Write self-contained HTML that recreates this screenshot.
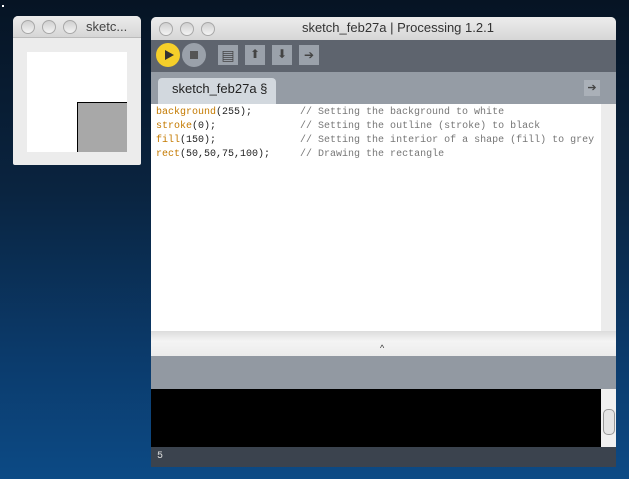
<!DOCTYPE html><html><head><style>
body{margin:0;width:629px;height:479px;overflow:hidden;position:relative;font-family:"Liberation Sans",sans-serif;
background:linear-gradient(180deg,#061424 0%,#0a2440 40%,#0b3b6c 75%,#0c4a85 100%);}
.a{position:absolute}
.tb{background:linear-gradient(#ececec,#d6d6d6);border-radius:5px 5px 0 0}
.lt{width:12px;height:12px;border-radius:50%;background:linear-gradient(#d0d0d0,#f4f4f4);border:1px solid #a8a8a8;top:4px}
.code{font-family:"Liberation Mono",monospace;font-size:10px;line-height:14px;white-space:pre;color:#222}
.k{color:#c47a00}.c{color:#777}
.sq{width:20px;height:20px;background:#9aa1aa;top:45px}
</style></head><body>
<div class="a" style="left:2px;top:5px;width:2px;height:2px;background:#fff"></div>
<div class="a" style="left:13px;top:16px;width:128px;height:149px;background:#ececec;border-radius:5px 5px 2px 2px">
 <div class="a tb" style="left:0;top:0;width:128px;height:21px;border-bottom:1px solid #bbb"></div>
 <div class="a lt" style="left:8px"></div><div class="a lt" style="left:29px"></div><div class="a lt" style="left:50px"></div>
 <div class="a" style="left:73px;top:3px;font-size:13px;color:#444">sketc...</div>
 <div class="a" style="left:14px;top:36px;width:100px;height:100px;background:#fff"></div>
 <div class="a" style="left:64px;top:86px;width:49px;height:49px;background:#a8a8a8;border-left:1px solid #000;border-top:1px solid #000"></div>
</div>
<div class="a" style="left:151px;top:17px;width:465px;height:450px;background:#ececec;border-radius:5px 5px 0 0;overflow:hidden">
 <div class="a tb" style="left:0;top:0;width:465px;height:23px"></div>
 <div class="a lt" style="left:8px;top:5px"></div><div class="a lt" style="left:29px;top:5px"></div><div class="a lt" style="left:50px;top:5px"></div>
 <div class="a" style="left:0;top:3px;width:465px;text-align:center;font-size:13px;color:#333">&nbsp;&nbsp;&nbsp;&nbsp;&nbsp;&nbsp;&nbsp;&nbsp;sketch_feb27a | Processing 1.2.1</div>
 <div class="a" style="left:0;top:23px;width:465px;height:32px;background:#5e646e"></div>
 <div class="a" style="left:5px;top:26px;width:24px;height:24px;border-radius:50%;background:#f5cf2a"></div>
 <div class="a" style="left:14px;top:33px;width:0;height:0;border-left:9px solid #333;border-top:5px solid transparent;border-bottom:5px solid transparent"></div>
 <div class="a" style="left:31px;top:26px;width:24px;height:24px;border-radius:50%;background:#9aa1aa"></div>
 <div class="a" style="left:39px;top:34px;width:8px;height:8px;background:#555"></div>
 <div class="a sq" style="left:67px;top:28px;color:#444;font-size:14px;text-align:center;line-height:20px">▤</div>
 <div class="a sq" style="left:94px;top:28px;color:#444;font-size:12px;text-align:center;line-height:18px">⬆</div>
 <div class="a sq" style="left:121px;top:28px;color:#444;font-size:12px;text-align:center;line-height:18px">⬇</div>
 <div class="a sq" style="left:148px;top:28px;color:#444;font-size:12px;text-align:center;line-height:20px">➔</div>
 <div class="a" style="left:0;top:55px;width:465px;height:32px;background:#959ca5"></div>
 <div class="a" style="left:7px;top:61px;width:118px;height:26px;background:#d2d8de;border-radius:4px 4px 0 0"></div>
 <div class="a" style="left:21px;top:64px;font-size:13px;color:#222">sketch_feb27a §</div>
 <div class="a" style="left:433px;top:63px;width:16px;height:16px;background:#aab0b8;color:#444;font-size:11px;text-align:center;line-height:16px">➔</div>
 <div class="a" style="left:0;top:87px;width:450px;height:227px;background:#fff"></div>
 <div class="a" style="left:450px;top:87px;width:15px;height:227px;background:#ececec"></div>
 <div class="a code" style="left:5px;top:86px;padding-top:3px"><span class="k">background</span>(255);        <span class="c">// Setting the background to white</span>
<span class="k">stroke</span>(0);              <span class="c">// Setting the outline (stroke) to black</span>
<span class="k">fill</span>(150);              <span class="c">// Setting the interior of a shape (fill) to grey</span>
<span class="k">rect</span>(50,50,75,100);     <span class="c">// Drawing the rectangle</span></div>
 <div class="a" style="left:0;top:314px;width:465px;height:25px;background:linear-gradient(#dcdcdc,#f4f4f4 40%,#ececec)"></div>
 <div class="a" style="left:229px;top:326px;font-size:9px;color:#333">^</div>
 <div class="a" style="left:0;top:339px;width:465px;height:33px;background:#9299a2"></div>
 <div class="a" style="left:0;top:372px;width:450px;height:58px;background:#000"></div>
 <div class="a" style="left:450px;top:372px;width:15px;height:58px;background:#f0f0f0"></div>
 <div class="a" style="left:452px;top:392px;width:10px;height:24px;border-radius:5px;border:1px solid #999;background:#e4e4e4"></div>
 <div class="a" style="left:0;top:430px;width:465px;height:20px;background:#3b434e"></div>
 <div class="a" style="left:6px;top:434px;font-size:10px;color:#ddd;font-family:'Liberation Mono',monospace">5</div>
</div>
</body></html>
